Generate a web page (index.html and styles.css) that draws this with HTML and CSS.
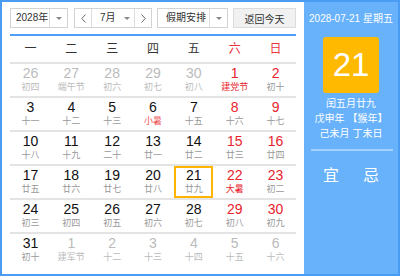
FILE: index.html
```html
<!DOCTYPE html>
<html lang="zh-CN">
<head>
    <meta charset="UTF-8">
    <title>万年历</title>
    <link rel="stylesheet" href="styles.css">
</head>
<body>
    <div class="calendar">
        <div class="main">
            <div class="toolbar">
                <div class="select year-select">
                    <span class="select-text">2028年</span>
                    <span class="select-arrow"><i class="caret"></i></span>
                </div>
                <div class="select month-select">
                    <span class="pager-btn prev">
                        <svg width="5" height="9" viewBox="0 0 5 9"><path d="M4.5 0.5 L0.8 4.5 L4.5 8.5" fill="none" stroke="#666" stroke-width="1"/></svg>
                    </span>
                    <span class="select-text month-text">7月</span>
                    <span class="month-arrow"><i class="caret"></i></span>
                    <span class="pager-btn next">
                        <svg width="5" height="9" viewBox="0 0 5 9"><path d="M0.5 0.5 L4.2 4.5 L0.5 8.5" fill="none" stroke="#666" stroke-width="1"/></svg>
                    </span>
                </div>
                <div class="select holiday-select">
                    <span class="select-text">假期安排</span>
                    <span class="select-arrow"><i class="caret"></i></span>
                </div>
                <button class="today-btn">返回今天</button>
            </div>
            <div class="rule"></div>

            <div class="weekdays">
                <span>一</span><span>二</span><span>三</span><span>四</span><span>五</span>
                <span class="weekend">六</span><span class="weekend">日</span>
            </div>

            <div class="week">
                <div class="day other"><b>26</b><small>初四</small></div>
                <div class="day other"><b>27</b><small>端午节</small></div>
                <div class="day other"><b>28</b><small>初六</small></div>
                <div class="day other"><b>29</b><small>初七</small></div>
                <div class="day other"><b>30</b><small>初八</small></div>
                <div class="day weekend festival"><b>1</b><small>建党节</small></div>
                <div class="day weekend"><b>2</b><small>初十</small></div>
            </div>
            <div class="week">
                <div class="day"><b>3</b><small>十一</small></div>
                <div class="day"><b>4</b><small>十二</small></div>
                <div class="day"><b>5</b><small>十三</small></div>
                <div class="day term"><b>6</b><small>小暑</small></div>
                <div class="day"><b>7</b><small>十五</small></div>
                <div class="day weekend"><b>8</b><small>十六</small></div>
                <div class="day weekend"><b>9</b><small>十七</small></div>
            </div>
            <div class="week">
                <div class="day"><b>10</b><small>十八</small></div>
                <div class="day"><b>11</b><small>十九</small></div>
                <div class="day"><b>12</b><small>二十</small></div>
                <div class="day"><b>13</b><small>廿一</small></div>
                <div class="day"><b>14</b><small>廿二</small></div>
                <div class="day weekend"><b>15</b><small>廿三</small></div>
                <div class="day weekend"><b>16</b><small>廿四</small></div>
            </div>
            <div class="week">
                <div class="day"><b>17</b><small>廿五</small></div>
                <div class="day"><b>18</b><small>廿六</small></div>
                <div class="day"><b>19</b><small>廿七</small></div>
                <div class="day"><b>20</b><small>廿八</small></div>
                <div class="day selected"><b>21</b><small>廿九</small></div>
                <div class="day weekend festival"><b>22</b><small>大暑</small></div>
                <div class="day weekend"><b>23</b><small>初二</small></div>
            </div>
            <div class="week">
                <div class="day"><b>24</b><small>初三</small></div>
                <div class="day"><b>25</b><small>初四</small></div>
                <div class="day"><b>26</b><small>初五</small></div>
                <div class="day"><b>27</b><small>初六</small></div>
                <div class="day"><b>28</b><small>初七</small></div>
                <div class="day weekend"><b>29</b><small>初八</small></div>
                <div class="day weekend"><b>30</b><small>初九</small></div>
            </div>
            <div class="week">
                <div class="day"><b>31</b><small>初十</small></div>
                <div class="day other"><b>1</b><small>建军节</small></div>
                <div class="day other"><b>2</b><small>十二</small></div>
                <div class="day other"><b>3</b><small>十三</small></div>
                <div class="day other"><b>4</b><small>十四</small></div>
                <div class="day other"><b>5</b><small>十五</small></div>
                <div class="day other"><b>6</b><small>十六</small></div>
            </div>
        </div>

        <div class="side">
            <div class="side-date">2028-07-21 星期五</div>
            <div class="side-day">21</div>
            <div class="side-lunar">
                <p>闰五月廿九</p>
                <p>戊申年 【猴年】</p>
                <p>己未月 丁未日</p>
            </div>
            <div class="side-line"></div>
            <div class="side-tags">
                <span>宜</span><span>忌</span>
            </div>
        </div>
    </div>
</body>
</html>
```

FILE: styles.css
```css
body {
    margin: 0;
    font-family: "Liberation Sans", "Noto Sans CJK SC", sans-serif;
    background-color: #fff;
}
.calendar {
    width: 400px;
    height: 276px;
    box-sizing: border-box;
    border: 2px solid #4a9cf2;
    display: flex;
    background-color: #fff;
}
.main {
    width: 302px;
    flex-shrink: 0;
    box-sizing: border-box;
    padding: 6px 8px 0 8px;
}
.toolbar {
    display: flex;
    height: 20px;
    font-size: 10px;
    color: #333;
    white-space: nowrap;
}
.select {
    display: flex;
    align-items: center;
    box-sizing: border-box;
    height: 20px;
    border: 1px solid #d3d3d3;
    background-color: #fff;
}
.select-text {
    flex: 1;
    padding-left: 6px;
    line-height: 18px;
}
.select-arrow {
    width: 17px;
    height: 18px;
    border-left: 1px solid #ddd;
    display: flex;
    align-items: center;
    justify-content: center;
}
.caret {
    width: 0;
    height: 0;
    border-left: 3px solid transparent;
    border-right: 3px solid transparent;
    border-top: 3px solid #888;
}
.year-select {
    width: 58px;
}
.year-select .select-text {
    padding-left: 5px;
}
.month-select {
    width: 78px;
    margin-left: 6px;
}
.pager-btn {
    width: 16px;
    height: 18px;
    display: flex;
    align-items: center;
    justify-content: center;
}
.prev {
    border-right: 1px solid #ddd;
}
.next {
    border-left: 1px solid #ddd;
}
.month-text {
    padding-left: 8px;
}
.month-arrow {
    width: 15px;
    display: flex;
    justify-content: center;
}
.holiday-select {
    width: 71px;
    margin-left: 5px;
}
.holiday-select .select-text {
    padding-left: 8px;
}
.today-btn {
    width: 63px;
    height: 20px;
    margin-left: 5px;
    padding: 0;
    font-family: inherit;
    font-size: 10px;
    color: #333;
    background-color: #f1f1f1;
    border: 1px solid #dcdcdc;
}
.rule {
    height: 2px;
    margin-top: 6px;
    background-color: #4e9ff5;
}
.weekdays {
    display: grid;
    grid-template-columns: repeat(7, 1fr);
    height: 26px;
    line-height: 26px;
    font-size: 12px;
    text-align: center;
    color: #333;
}
.weekdays .weekend {
    color: #e8363d;
}
.week {
    display: grid;
    grid-template-columns: repeat(7, 1fr);
    height: 34px;
    box-sizing: border-box;
    border-top: 2px solid #e4e4e4;
}
.day {
    margin: 0 1px;
    border: 2px solid transparent;
    text-align: center;
}
.day b {
    display: block;
    font-weight: normal;
    font-size: 14px;
    line-height: 15px;
    color: #111;
}
.day small {
    display: block;
    font-size: 9px;
    line-height: 13px;
    color: #999;
}
.day.weekend b {
    color: #e8232d;
}
.day.festival small {
    color: #e8232d;
}
.day.term small {
    color: #f0585e;
}
.day.other b,
.day.other small {
    color: #bbb;
}
.day.selected {
    border-color: #ffb400;
}
.side {
    flex: 1;
    background-color: #68b2fc;
    color: #fff;
    text-align: center;
}
.side-date {
    height: 35px;
    line-height: 34px;
    font-size: 10px;
}
.side-day {
    width: 56px;
    height: 56px;
    margin: 0 auto;
    line-height: 56px;
    font-size: 33px;
    background-color: #ffba00;
    border-radius: 3px;
}
.side-lunar {
    margin-top: 3px;
    font-size: 10px;
}
.side-lunar p {
    margin: 0;
    line-height: 15px;
}
.side-line {
    height: 2px;
    margin: 8px 5px 0 7px;
    background-color: rgba(255, 255, 255, 0.4);
}
.side-tags {
    display: flex;
    justify-content: center;
    gap: 24px;
    margin-top: 11px;
    font-size: 16px;
}
```
